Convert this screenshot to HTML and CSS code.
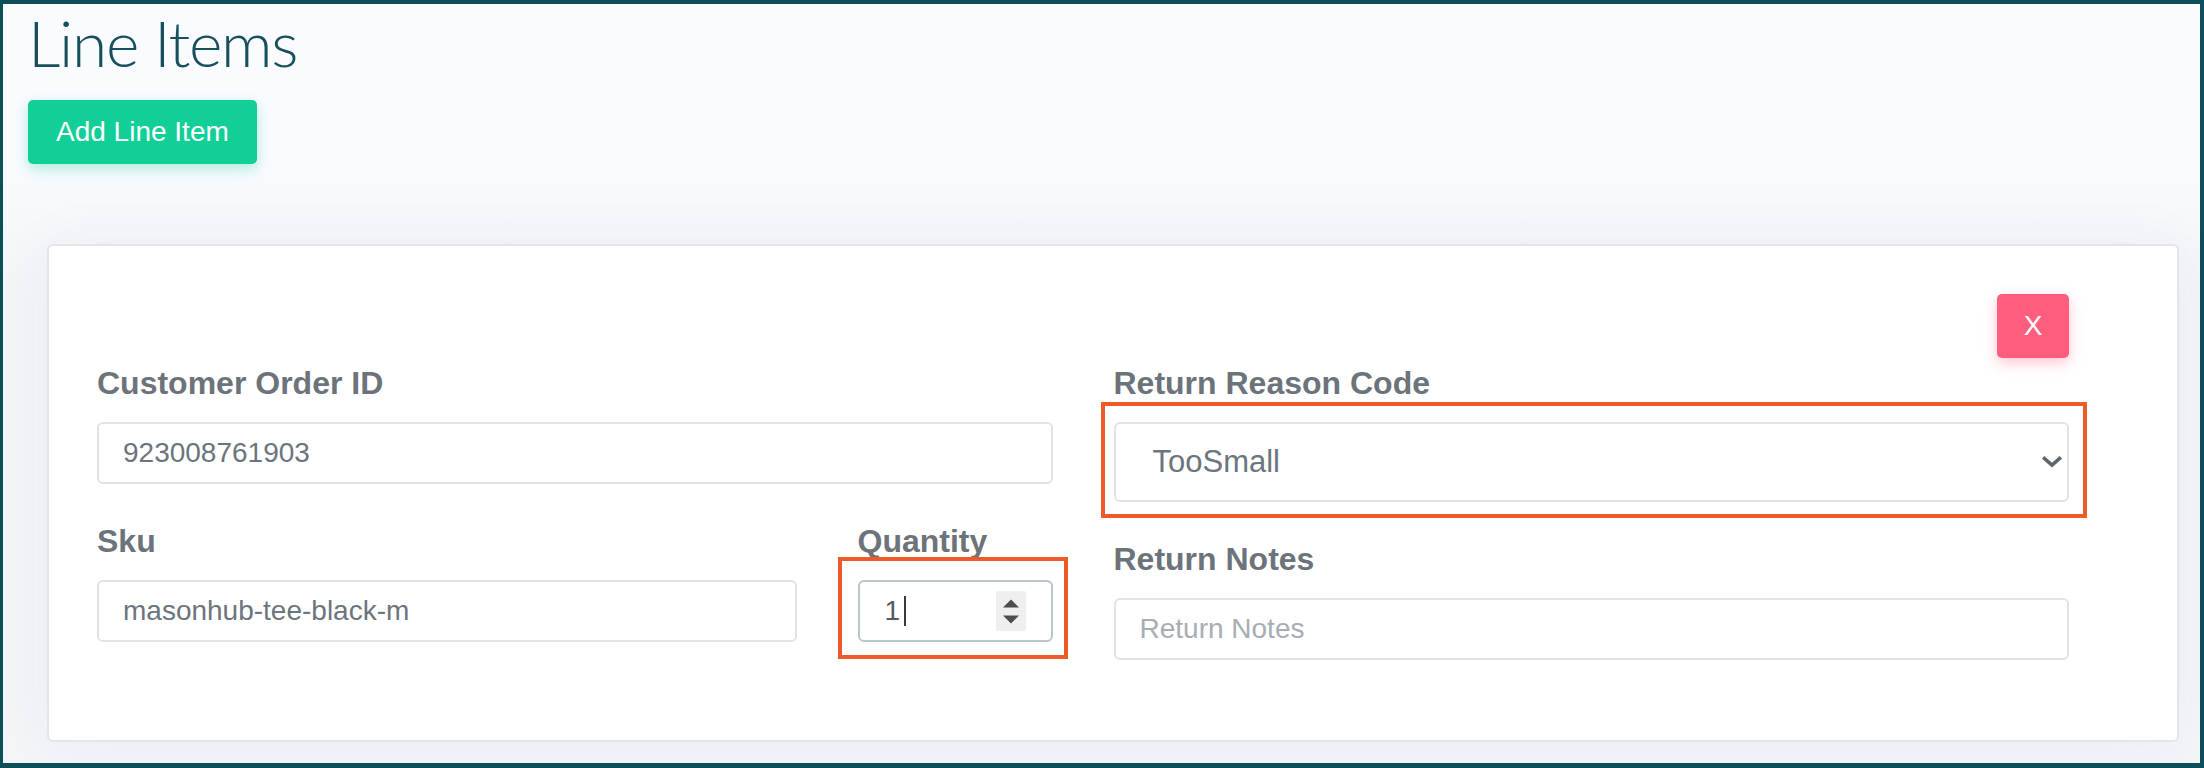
FILE: index.html
```html
<!DOCTYPE html>
<html lang="en">
<head>
<meta charset="utf-8">
<title>Line Items</title>
<link rel="stylesheet" href="styles.css">
</head>
<body>
<div class="page">
  <h1 class="title">Line Items</h1>
  <button class="btn-add" type="button">Add Line Item</button>

  <div class="card">
    <div class="card-head">
      <button class="btn-x" type="button">X</button>
    </div>
    <div class="card-grid">
      <div class="col">
        <div class="group">
          <label class="lbl">Customer Order ID</label>
          <input class="field" type="text" value="923008761903">
        </div>
        <div class="subrow">
          <div class="group last">
            <label class="lbl">Sku</label>
            <input class="field" type="text" value="masonhub-tee-black-m">
          </div>
          <div class="group last">
            <label class="lbl">Quantity</label>
            <div class="hl-wrap">
              <div class="field qty">
                <span class="qty-val">1</span><span class="caret"></span>
                <span class="spin">
                  <svg width="30" height="40" viewBox="0 0 30 40">
                    <polygon points="7,16.5 23,16.5 15,8.5" fill="#4d4d4d"/>
                    <polygon points="7,24.5 23,24.5 15,32.5" fill="#4d4d4d"/>
                  </svg>
                </span>
              </div>
              <span class="hl hl-qty"></span>
            </div>
          </div>
        </div>
      </div>
      <div class="col">
        <div class="group">
          <label class="lbl">Return Reason Code</label>
          <div class="hl-wrap">
            <div class="field select">
              <span class="select-val">TooSmall</span>
              <svg class="chev" width="20" height="12" viewBox="0 0 20 12">
                <polyline points="2.5,2.5 10,9 17.5,2.5" fill="none" stroke="#5f666d" stroke-width="3.6" stroke-linecap="square"/>
              </svg>
            </div>
            <span class="hl hl-sel"></span>
          </div>
        </div>
        <div class="group last">
          <label class="lbl">Return Notes</label>
          <input class="field" type="text" placeholder="Return Notes">
        </div>
      </div>
    </div>
  </div>
</div>
</body>
</html>
```

FILE: styles.css
```css
html, body {
  margin: 0;
  padding: 0;
}

body {
  background: #0e4e58;
  font-family: "Liberation Sans", Arial, sans-serif;
  height: 768px;
  overflow: hidden;
}

.page {
  margin: 4px 4px 5px 3px;
  height: 759px;
  box-sizing: border-box;
  padding: 1px 0 0 25px;
  background: linear-gradient(#fafbff 0, #fafbff 150px, #f4f5f9 280px, #f4f5f9 100%);
}

.title {
  margin: 0 0 19px 0;
  font-family: Lato, "Liberation Sans", sans-serif;
  font-weight: 300;
  font-size: 64px;
  line-height: 76px;
  letter-spacing: -1.3px;
  color: #17505c;
}

.btn-add {
  display: block;
  height: 64px;
  padding: 0 28px 0 28px;
  border: 0;
  border-radius: 5px;
  background: #11cf97;
  color: #ffffff;
  font-family: "Liberation Sans", Arial, sans-serif;
  font-size: 28px;
  box-shadow: 0 5px 14px rgba(17, 207, 151, 0.32);
}

.card {
  margin: 80px 21px 0 19px;
  background: #ffffff;
  border: 2px solid #e2e5ea;
  border-radius: 6px;
  padding: 48px 108px 80px 48px;
  box-shadow: 0 0 60px rgba(40, 50, 90, 0.05);
}

.card-head {
  display: flex;
  justify-content: flex-end;
  margin-bottom: 6px;
}

.btn-x {
  width: 72px;
  height: 64px;
  border: 0;
  border-radius: 5px;
  background: #fe5d7d;
  color: #ffffff;
  font-family: "Liberation Sans", Arial, sans-serif;
  font-size: 28px;
  padding: 0;
  box-shadow: 0 5px 14px rgba(254, 93, 125, 0.35);
}

.card-grid {
  display: grid;
  grid-template-columns: 1fr 1fr;
  column-gap: 61px;
  align-items: start;
}

.subrow {
  display: grid;
  grid-template-columns: 1fr 195px;
  column-gap: 61px;
}

.group {
  margin-bottom: 38px;
}

.group.last {
  margin-bottom: 0;
}

.lbl {
  display: block;
  font-weight: bold;
  font-size: 32px;
  line-height: 38px;
  color: #6c737a;
  margin-bottom: 20px;
}

.field {
  display: block;
  width: 100%;
  height: 62px;
  box-sizing: border-box;
  border: 2px solid #e0e4e8;
  border-radius: 6px;
  background: #ffffff;
  padding: 0 24px;
  font-family: "Liberation Sans", Arial, sans-serif;
  font-size: 28px;
  color: #6c757d;
  outline: none;
}

.field::placeholder {
  color: #a6adb4;
}

.qty {
  display: flex;
  align-items: center;
  border-color: #bcc4cc;
  padding-right: 25px;
  color: #555b61;
}

.qty-val {
  line-height: 1;
  margin-left: 1px;
}

.caret {
  width: 2px;
  height: 30px;
  background: #3a3a3a;
  margin-left: 4px;
}

.spin {
  margin-left: auto;
  width: 30px;
  height: 40px;
  background: #efefef;
  border-radius: 2px;
  display: flex;
}

.select {
  display: flex;
  align-items: center;
  justify-content: space-between;
  height: 80px;
  padding: 0 5px 0 37px;
  font-size: 31px;
}

.chev {
  display: block;
}

.hl-wrap {
  position: relative;
}

.hl {
  position: absolute;
  border: 4px solid #ef5a29;
  pointer-events: none;
}

.hl-qty {
  top: -23px;
  left: -20px;
  right: -15px;
  bottom: -17px;
}

.hl-sel {
  top: -20px;
  left: -13px;
  right: -18px;
  bottom: -16px;
}
```
